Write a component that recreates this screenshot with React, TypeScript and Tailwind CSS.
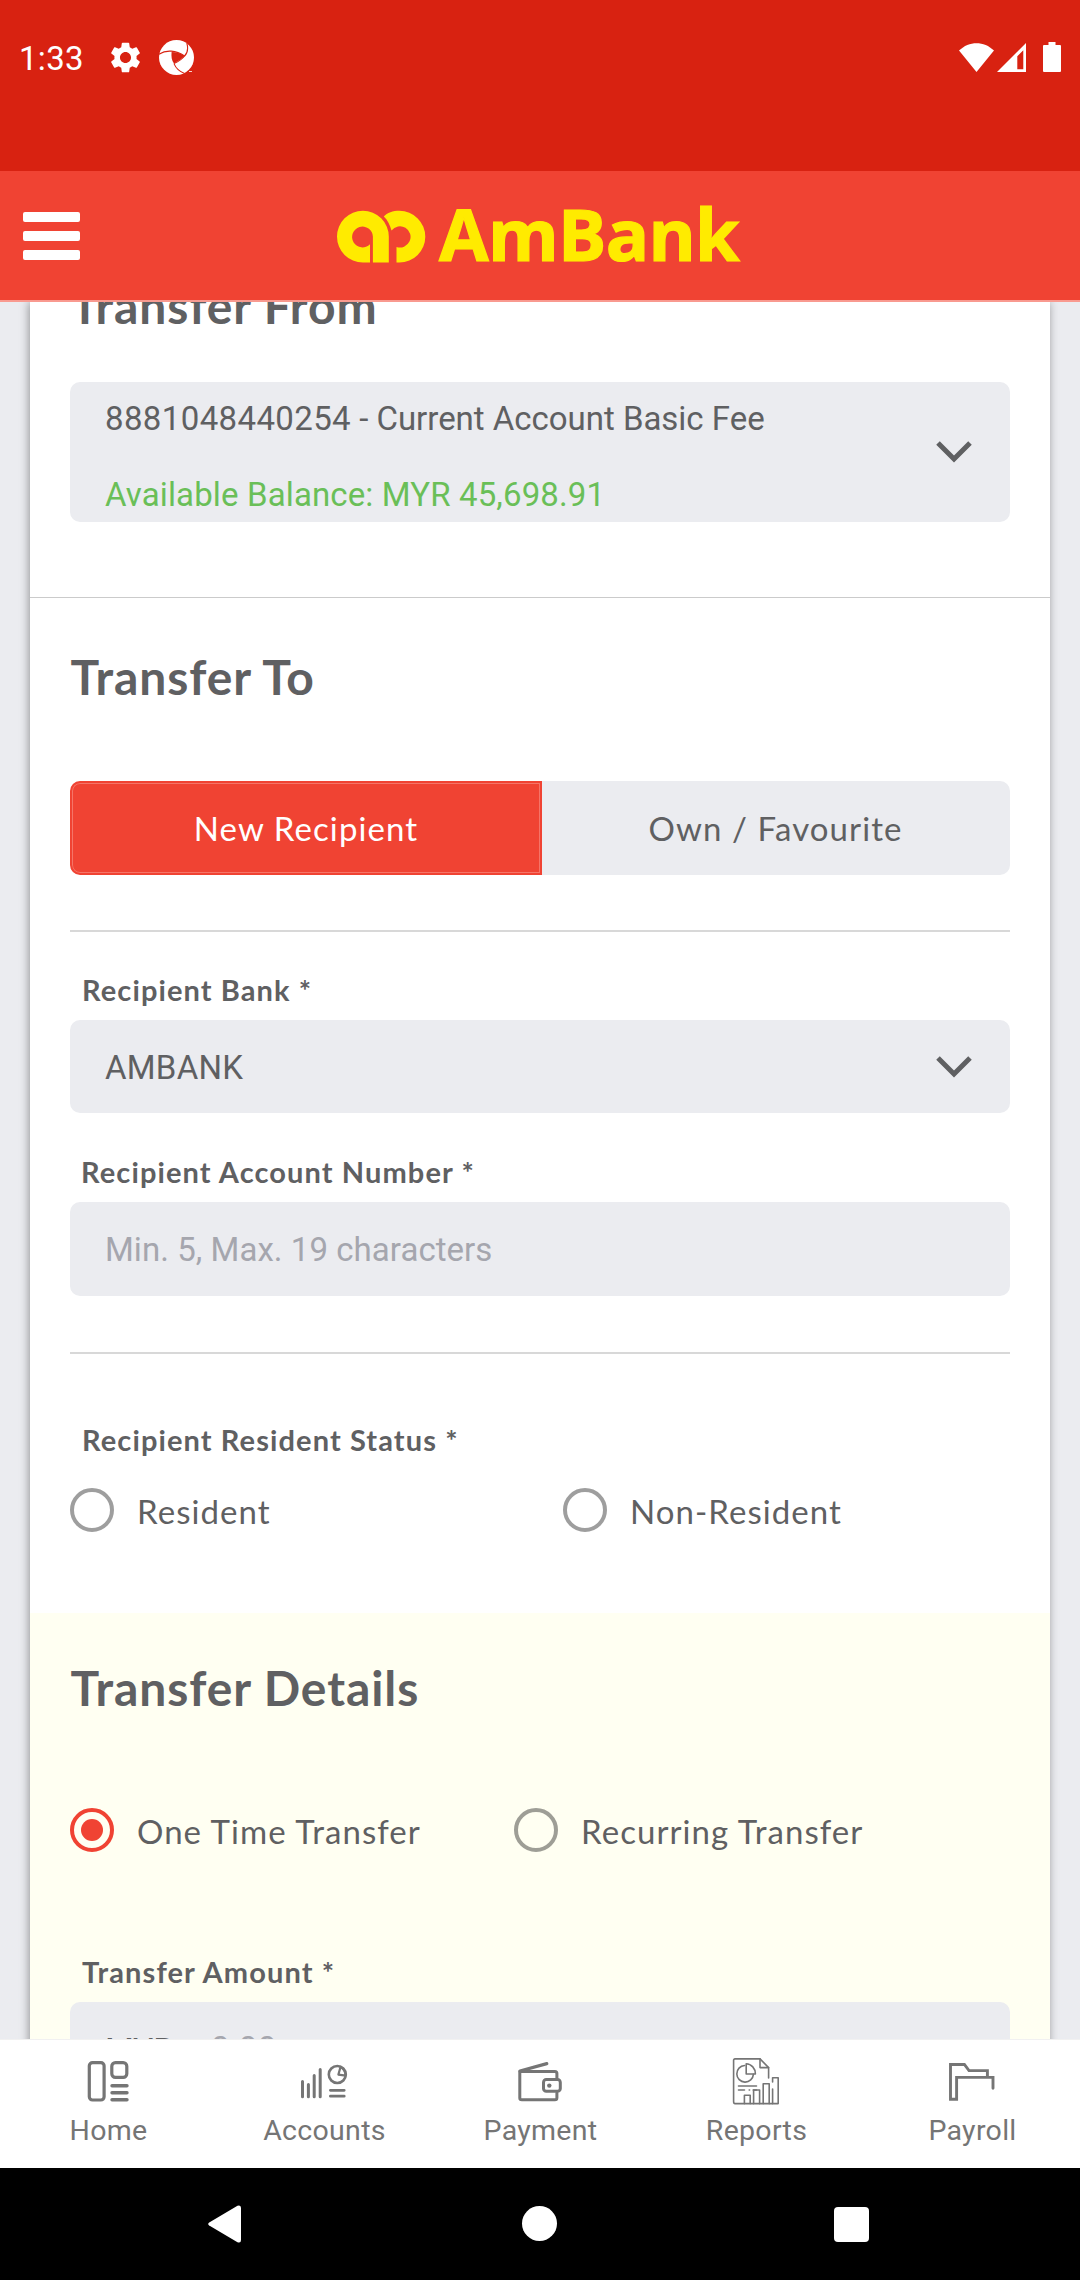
import type { ReactNode } from "react";
import { MdSettings } from "react-icons/md";

function StatusBar() {
  return (
    <div className="flex h-[171px] shrink-0 items-start bg-[#d82211] text-white">
      <span className="ml-[19px] mt-[39px] w-[66px] whitespace-nowrap font-[Roboto] text-[33px] leading-[39px] tracking-[0.3px]">1:33</span>
      <MdSettings className="ml-[22px] mt-[39px] size-[37px]" />
      <svg className="ml-[15px] mt-[40px]" width="35" height="35" viewBox="0 0 35 35">
        <circle cx="17.5" cy="17.5" r="17.5" fill="#fff" />
        <path d="M12.6 12 C17 12 22 13.5 25.6 16 C22.5 19.5 18.5 21 15 23.6 C12.5 20.5 12.2 16 12.6 12Z" fill="#d82211" />
        <path d="M0 14.2 C7 9.5 17 10.2 25.6 16 M27.8 3 C29.4 8.5 28.5 13 25.6 16 C22.5 20 18.5 22 15 23.6 M15 23.6 C17 28.5 20.5 31.5 25.5 33.4" fill="none" stroke="#d82211" strokeWidth="1.1" />
        <path d="M30 31.5 H33" stroke="#fff" strokeWidth="0.8" />
      </svg>
      <svg className="ml-auto mr-[19px] mt-[42px]" width="102" height="30" viewBox="0 0 102 30">
        <g fill="#fff">
          <path d="M0 8.6 C10 -1.2 25 -1.2 35 8.6 L17.5 30Z" />
          <path fillRule="evenodd" d="M38 30 L67 1 V30Z M58.3 27.3 H64.3 V8.3 L58.3 14.3Z" />
          <path d="M89.5 0 H96.5 V3 H101 Q102 3 102 4 V29 Q102 30 101 30 H85 Q84 30 84 29 V4 Q84 3 85 3 H89.5Z" />
        </g>
      </svg>
    </div>
  );
}

function Header() {
  return (
    <header className="flex h-[131px] shrink-0 items-start border-b-2 border-[#f99a90] bg-[#f04333]">
      <button className="ml-[23px] mt-[41px] flex w-[57px] flex-col gap-[9px]" aria-label="Menu">
        <span className="h-[10px] w-full rounded-[2px] bg-white" />
        <span className="h-[10px] w-full rounded-[2px] bg-white" />
        <span className="h-[10px] w-full rounded-[2px] bg-white" />
      </button>
      <svg className="ml-[257px] mt-[39px]" width="90" height="54" viewBox="0 0 90 54" fill="#ffeb00">
        <path d="M33 52.5 H25.9 A25.9 25.9 0 1 1 51.8 26.6 V52.5 H35.9 V26.6 A10.4 10.4 0 1 0 33 34.2Z" />
        <path d="M46.8 6.6 C50 2.8 56 0.8 62.4 0.8 A25.9 25.9 0 0 1 62.4 52.6 H59.5 V36.9 A10.6 10.6 0 1 0 54.5 20.5 C53 15 50.5 10 46.8 6.6Z" />
      </svg>
      <span className="ml-[12px] mt-[12px] whitespace-nowrap font-['Open_Sans'] text-[72px] font-bold leading-[101px] tracking-[-0.7px] text-[#ffeb00] [-webkit-text-stroke:1.2px_#ffeb00]">AmBank</span>
    </header>
  );
}

function Heading({ children }: { children: ReactNode }) {
  return <h2 className="ml-[0.5px] whitespace-nowrap text-[48px] font-bold leading-[57px] tracking-[0.93px]">{children}</h2>;
}

function Label({ children }: { children: ReactNode }) {
  return <div className="ml-[12px] whitespace-nowrap text-[29px] font-bold leading-[35px] tracking-[1.1px]">{children}</div>;
}

function Chevron() {
  return (
    <svg width="36" height="22" viewBox="0 0 36 22" fill="none">
      <path d="M2 2 L18 18 L34 2" stroke="#5f6062" strokeWidth="5" />
    </svg>
  );
}

function Rule() {
  return <div className="h-[2px] bg-[#d8d8d8]" />;
}

function Radio({ label, checked = false }: { label: string; checked?: boolean }) {
  return (
    <label className="flex h-[44px] items-start">
      <span className={checked ? "flex size-[44px] items-center justify-center rounded-full border-4 border-[#f04333]" : "size-[44px] rounded-full border-4 border-black/38"}>
        {checked && <span className="size-[22px] rounded-full bg-[#f04333]" />}
      </span>
      <span className="ml-[23px] mt-[3px] whitespace-nowrap text-[33px] leading-[40px] tracking-[1.06px]">{label}</span>
    </label>
  );
}

function NavItem({ label, children }: { label: string; children: ReactNode }) {
  return (
    <div className="flex w-[216px] flex-col items-center pt-[17px] text-[#757575]">
      <svg width="48" height="48" viewBox="0 0 48 48" fill="none" stroke="currentColor" strokeWidth="3" strokeLinecap="round" strokeLinejoin="round">
        {children}
      </svg>
      <span className="ml-px mt-[9px] font-[Roboto] text-[28.5px] leading-[33px] tracking-[0.3px]">{label}</span>
    </div>
  );
}

function BottomNav() {
  return (
    <nav className="flex h-[129px] shrink-0 border-t border-[#f1f1f1] bg-white">
      <NavItem label="Home">
        <rect x="5.3" y="5.6" width="14.8" height="37.4" rx="3.2" strokeWidth="3.2" />
        <rect x="27.8" y="5.6" width="15" height="14.8" rx="3.6" strokeWidth="3.2" />
        <path d="M28 28.8 H43 M28 35.8 H43 M28 42.8 H43" strokeWidth="3.4" />
      </NavItem>
      <NavItem label="Accounts">
        <path d="M2.5 24.5 V39.8 M8.4 27.5 V39.8 M14.2 18.5 V39.8 M20.2 12.5 V39.8" strokeWidth="3" />
        <circle cx="37.3" cy="17.5" r="8.5" strokeWidth="2.6" />
        <path d="M40.5 10 L38.4 17.6 L45.6 18.6 C45.4 15 43.6 11.6 40.5 10Z" strokeWidth="2.2" />
        <path d="M30.4 33.3 H44.2 M30.4 39.2 H44.2" strokeWidth="2.8" />
      </NavItem>
      <NavItem label="Payment">
        <path d="M40.9 21 V16.6 Q40.9 14.6 38.9 14.6 H3.8 V41 Q3.8 42.8 5.8 42.8 H38.9 Q40.9 42.8 40.9 40.8 V36" />
        <path d="M4 14 L30.8 6.6" strokeWidth="3.2" />
        <rect x="27.5" y="22.6" width="16.8" height="11.6" rx="2.8" />
        <circle cx="33.3" cy="28.6" r="2.2" fill="currentColor" stroke="none" />
      </NavItem>
      <NavItem label="Reports">
        <g strokeWidth="1.6">
          <path d="M36.6 21 V10.6 L28 1.9 H3 Q1.6 1.9 1.6 3.3 V44.5 Q1.6 46.6 3 46.6 H46.2 V20.8 H40.6 V25" />
          <path d="M28 1.9 V10.6 H36.6 M40.6 32 V46.6" />
          <path d="M12.6 8.5 A8.3 8.3 0 1 0 21.4 17.4" />
          <path d="M14.2 6.8 V17 H23.4 A9.4 10 0 0 0 14.2 6.8Z" />
          <path d="M6.5 29 H24.5 M6.5 33 H12.5 M17.2 33 H17.6 M21.2 33 H24.5" />
          <path d="M12.4 46.6 V38.3 H18.2 V46.6 M21.6 46.6 V33 H27.6 V46.6 M31.2 46.6 V26.8 H37.2 V46.6" />
        </g>
      </NavItem>
      <NavItem label="Payroll">
        <path d="M45 31.3 V20.4 H8.6 V42.2 H2.5 V7.5 H16.4 L21 13.6 H39.4 V20" strokeWidth="2.9" strokeLinejoin="miter" />
      </NavItem>
    </nav>
  );
}

function SystemBar() {
  return (
    <div className="flex h-[112px] shrink-0 items-start bg-black">
      <svg className="ml-[208px] mt-[37px]" width="33" height="38" viewBox="0 0 33 38">
        <path d="M1.2 17.4 L29.5 0.8 Q33 -0.4 33 3 V35 Q33 38.4 29.5 37.2 L1.2 20.6 Q-0.8 19 1.2 17.4Z" fill="#fff" />
      </svg>
      <div className="ml-[281px] mt-[38px] size-[35px] rounded-full bg-white" />
      <div className="ml-[277px] mt-[39px] size-[35px] rounded-[4px] bg-white" />
    </div>
  );
}

const field = "flex items-start justify-between rounded-[10px] bg-[#ebecf0] pl-[35px] pr-[38px] font-[Roboto] text-[33px] leading-[39px]";

export default function App() {
  return (
    <div className="flex h-[2280px] w-[1080px] flex-col overflow-hidden bg-[#ebecf0] font-[Lato] text-[#5f6062]">
      <StatusBar />
      <Header />
      <main className="h-[1737px] shrink-0 overflow-hidden px-[30px]">
        <div className="h-[1800px] bg-white shadow-[-1px_0_9px_rgba(0,0,0,0.38)]">
          <section className="h-[296px] border-b border-[#cbcbcb] px-[40px]">
            <div className="-mt-[25px] inline-block align-top">
              <Heading>Transfer From</Heading>
            </div>
            <div className="mt-[48px] flex h-[140px] items-center justify-between rounded-[10px] bg-[#ebecf0] pl-[35px] pr-[38px] font-[Roboto] text-[33px] leading-[39px]">
              <div className="flex flex-col gap-[37px] whitespace-nowrap pt-[9px]">
                <span className="tracking-[-0.02px]"><span className="tracking-[0.38px]">8881048440254</span> - Current Account Basic Fee</span>
                <span className="tracking-[0.13px] text-[#6abf58]">Available Balance: MYR 45,698.91</span>
              </div>
              <Chevron />
            </div>
          </section>

          <section className="px-[40px] pb-[81px] pt-[50px]">
            <Heading>Transfer To</Heading>
            <div className="mt-[76px] flex h-[94px] text-[33px] leading-[40px] tracking-[1.1px]">
              <button className="w-[472px] rounded-l-[10px] border-2 border-[#f04333] bg-[#f04333] text-white shadow-[inset_0_0_0_1px_#f57468]">New Recipient</button>
              <button className="flex-1 rounded-r-[10px] bg-[#ebecf0] pr-px">Own / Favourite</button>
            </div>
            <div className="mb-[40px] mt-[55px]"><Rule /></div>
            <Label>Recipient Bank *</Label>
            <div className={field + " mt-[13px] h-[93px]"}>
              <span className="mt-[28px] tracking-[0.25px]">AMBANK</span>
              <span className="mt-[36px]"><Chevron /></span>
            </div>
            <div className="mt-[41px] -ml-px"><Label>Recipient Account Number *</Label></div>
            <div className={field + " mt-[13px] h-[94px]"}>
              <span className="mt-[28px] tracking-[0.05px] text-[#a5a6ae]">Min. 5, Max. 19 characters</span>
            </div>
            <div className="mb-[68px] mt-[56px]"><Rule /></div>
            <Label>Recipient Resident Status *</Label>
            <div className="mt-[31px] grid grid-cols-[493px_1fr]">
              <Radio label="Resident" />
              <Radio label="Non-Resident" />
            </div>
          </section>

          <section className="h-[500px] bg-[#fffff2] px-[40px] pt-[46px]">
            <Heading>Transfer Details</Heading>
            <div className="mt-[92px] grid grid-cols-[444px_1fr]">
              <Radio label="One Time Transfer" checked />
              <Radio label="Recurring Transfer" />
            </div>
            <div className="mt-[102px]"><Label>Transfer Amount *</Label></div>
            <div className="mt-[13px] flex h-[94px] items-start rounded-[10px] bg-[#ebecf0] pl-[35px] font-[Roboto] text-[33px] leading-[39px]">
              <span className="mt-[29px] w-[106px]">MYR</span>
              <span className="mt-[27px] tracking-[0.3px] text-[#a5a6ae]">0.00</span>
            </div>
          </section>
        </div>
      </main>
      <BottomNav />
      <SystemBar />
    </div>
  );
}
